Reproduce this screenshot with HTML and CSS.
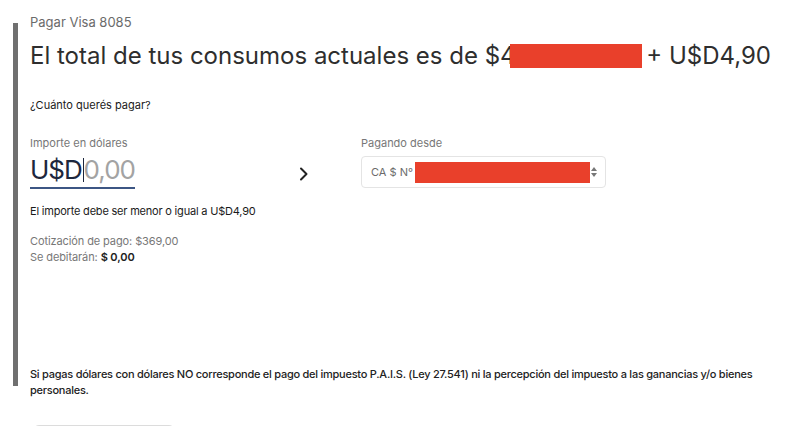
FILE: index.html
```html
<!DOCTYPE html>
<html lang="es">
<head>
    <meta charset="UTF-8">
    <meta name="viewport" content="width=device-width, initial-scale=1.0">
    <title>Pagar Visa 8085</title>
    <link rel="stylesheet" href="styles.css">
</head>
<body>
    <div class="page">
        <p class="crumb">Pagar Visa 8085</p>

        <div class="panel">
            <h1 class="total">El total de tus consumos actuales es de $4<span class="redact redact-total"></span> + U$D4,90</h1>

            <p class="question">¿Cuánto querés pagar?</p>

            <div class="row">
                <div class="col-amount">
                    <label class="field-label">Importe en dólares</label>
                    <div class="amount-input">
                        <span class="prefix">U$D</span><span class="caret"></span><span class="placeholder">0,00</span>
                    </div>
                    <p class="hint">El importe debe ser menor o igual a U$D4,90</p>
                    <p class="rate">Cotización de pago: $369,00<br>Se debitarán: <strong>$ 0,00</strong></p>
                </div>

                <div class="col-arrow">
                    <svg width="10" height="14" viewBox="0 0 10 14">
                        <path d="M2 1.5 L7.5 7 L2 12.5" fill="none" stroke="#222" stroke-width="2" stroke-linecap="round" stroke-linejoin="round"/>
                    </svg>
                </div>

                <div class="col-account">
                    <label class="field-label">Pagando desde</label>
                    <div class="select">
                        <span class="select-text">CA $ N°</span>
                        <span class="redact redact-account"></span>
                        <span class="select-arrows">
                            <svg width="6" height="12" viewBox="0 0 6 12">
                                <path d="M0 5 L3 1 L6 5 Z" fill="#777"/>
                                <path d="M0 7 L3 11 L6 7 Z" fill="#777"/>
                            </svg>
                        </span>
                    </div>
                </div>
            </div>
        </div>

        <p class="note">Si pagas dólares con dólares NO corresponde el pago del impuesto P.A.I.S. (Ley 27.541) ni la percepción del impuesto a las ganancias y/o bienes personales.</p>

        <div class="actions">
            <div class="btn-outline"></div>
        </div>
    </div>
</body>
</html>
```

FILE: styles.css
```css
body {
    margin: 0;
    font-family: Inter, "Noto Sans", sans-serif;
    color: #333;
    background: #fff;
    overflow: hidden;
}

.page {
    padding: 14px 0 0 13px;
}

.crumb {
    margin: 0 0 0 17px;
    font-size: 13px;
    line-height: 16px;
    color: #6b6b6b;
}

.panel {
    margin-top: -7px;
    height: 363px;
    padding: 18px 0 0 12px;
    border-left: 5px solid #707070;
    box-sizing: border-box;
}

.total {
    margin: 0;
    font-size: 24px;
    line-height: 30px;
    font-weight: 400;
    color: #2e2e2e;
    white-space: nowrap;
}

.redact {
    display: inline-block;
    background: #e9402b;
}

.redact-total {
    width: 132px;
    height: 24px;
    margin-left: -6px;
    margin-right: -2px;
    vertical-align: -4px;
}

.question {
    margin: 27px 0 0;
    font-size: 11px;
    line-height: 14px;
    font-weight: 400;
    color: #1a1a1a;
}

.row {
    display: flex;
    margin-top: 24px;
}

.col-amount {
    width: 236px;
}

.col-arrow {
    width: 76px;
    margin-right: 19px;
    padding-top: 31px;
    display: flex;
    justify-content: center;
    align-items: flex-start;
}

.col-account {
    width: 245px;
}

.field-label {
    display: block;
    font-size: 11px;
    line-height: 14px;
    color: #777;
}

.amount-input {
    width: 105px;
    margin-top: 3px;
    height: 34px;
    display: flex;
    align-items: center;
    border-bottom: 2px solid #3c5684;
    font-size: 26px;
    line-height: 32px;
    letter-spacing: -1px;
    white-space: nowrap;
}

.prefix {
    color: #1d273d;
}

.caret {
    display: inline-block;
    width: 1px;
    height: 24px;
    margin: 0 0 0 1px;
    background: #1d273d;
}

.placeholder {
    color: #a3a3a3;
}

.hint {
    margin: 15px 0 0;
    font-size: 11px;
    line-height: 14px;
    font-weight: 400;
    color: #1a1a1a;
    letter-spacing: -0.2px;
    white-space: nowrap;
}

.rate {
    margin: 15px 0 0;
    font-size: 11px;
    line-height: 16px;
    color: #777;
    letter-spacing: -0.1px;
}

.rate strong {
    color: #222;
    font-weight: 600;
}

.select {
    margin-top: 6px;
    width: 245px;
    height: 32px;
    box-sizing: border-box;
    border: 1px solid #e4e4e4;
    border-radius: 4px;
    display: flex;
    align-items: center;
    padding: 0 8px 0 9px;
}

.select-text {
    font-size: 11px;
    color: #6b6b6b;
    width: 44px;
}

.redact-account {
    width: 177px;
    height: 21px;
}

.select-arrows {
    display: flex;
    margin-left: 1px;
}

.note {
    margin: -20px 0 0 17px;
    width: 740px;
    font-size: 11px;
    line-height: 16px;
    font-weight: 450;
    color: #222;
    letter-spacing: -0.25px;
}

.actions {
    margin: 27px 0 0 20px;
}

.btn-outline {
    width: 140px;
    height: 40px;
    border: 1px solid #dcdcdc;
    border-radius: 6px;
}
```
